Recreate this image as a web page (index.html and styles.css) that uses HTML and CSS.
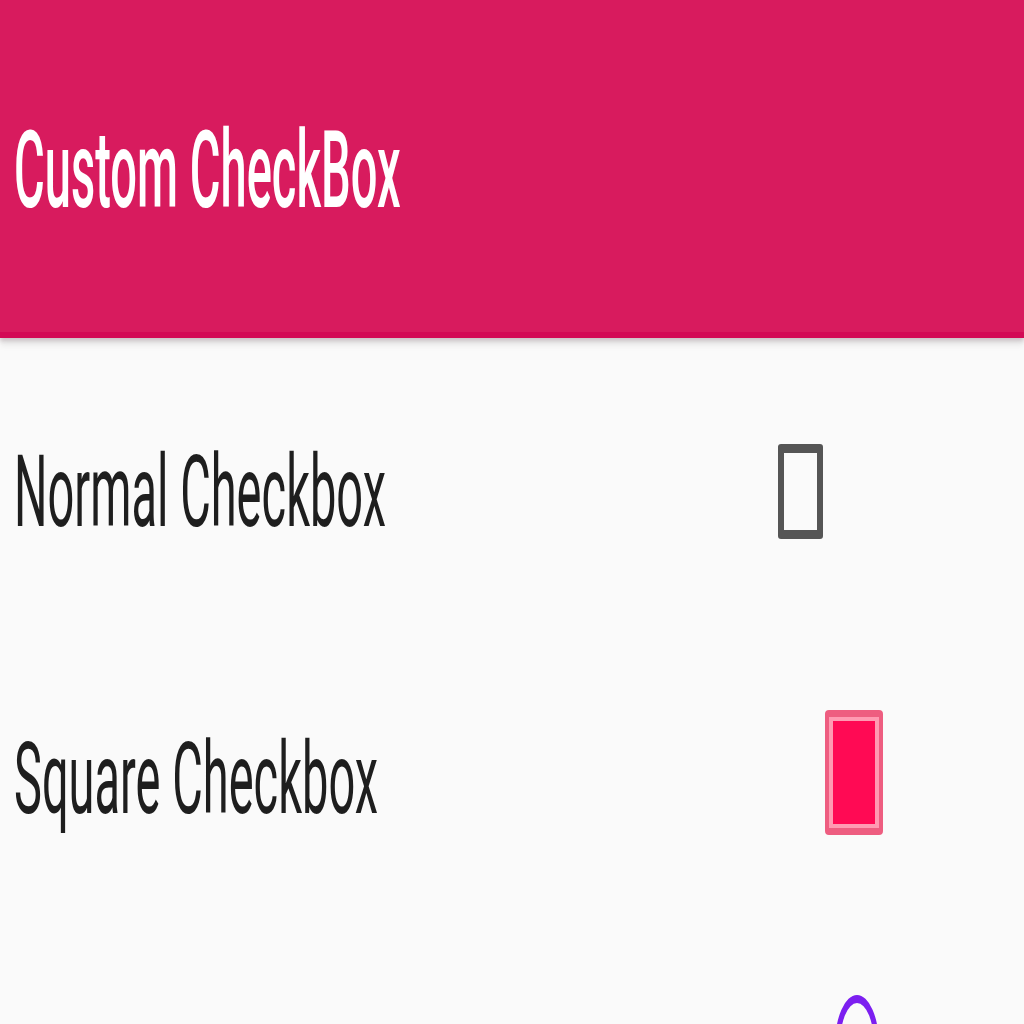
FILE: index.html
```html
<!DOCTYPE html>
<html>
<head>
<meta charset="utf-8">
<link rel="stylesheet" href="styles.css">
</head>
<body>
<header class="appbar">
  <h1 class="title"><span class="squeeze">Custom CheckBox</span></h1>
</header>
<main class="list">
  <div class="row">
    <div class="label label-normal"><span class="squeeze">Normal Checkbox</span></div>
    <div class="box box-normal"></div>
  </div>
  <div class="row">
    <div class="label label-square"><span class="squeeze">Square Checkbox</span></div>
    <div class="box box-square"></div>
  </div>
  <div class="row row-top">
    <div class="box box-circle"></div>
  </div>
</main>
</body>
</html>
```
FILE: styles.css
```css
html, body {
  margin: 0;
  padding: 0;
  width: 1024px;
  height: 1024px;
  overflow: hidden;
  background: #fafafa;
  font-family: Roboto, "Liberation Sans", sans-serif;
}
.appbar {
  position: relative;
  z-index: 1;
  height: 332px;
  background: #d81b5e;
  border-bottom: 6px solid #d30a55;
  box-shadow: 0 3px 4px rgba(120, 90, 100, 0.28), 0 8px 6px rgba(0, 0, 0, 0.06);
  box-sizing: content-box;
  padding-left: 14px;
}
.title {
  margin: 0;
  padding-top: 116px;
  font-size: 108px;
  line-height: 1;
  font-weight: 500;
  color: #fff;
  white-space: nowrap;
}
.squeeze {
  display: inline-block;
  transform-origin: left center;
  white-space: nowrap;
}
.title .squeeze {
  transform: scaleX(0.436);
}
.list {
  padding-top: 10px;
}
.row {
  height: 287px;
  display: flex;
  align-items: center;
  padding-left: 14px;
}
.row-top {
  align-items: flex-start;
}
.label {
  font-size: 100px;
  line-height: 1;
  color: #1e1e1e;
  flex: none;
}
.label .squeeze {
  transform: scaleX(0.47);
}
.label-normal {
  width: 764px;
}
.label-square {
  width: 811px;
}
.box {
  flex: none;
  box-sizing: border-box;
}
.box-normal {
  width: 45px;
  height: 95px;
  border-style: solid;
  border-color: #555;
  border-width: 9px 6px;
  border-radius: 3px;
  background: #fafafa;
}
.box-square {
  width: 58px;
  height: 125px;
  margin-top: -12px;
  border-style: solid;
  border-color: #ee5d80;
  border-width: 7px 4px;
  border-radius: 4px;
  background: #ff0a54;
  box-shadow: inset 0 0 0 4px #ff9ab2;
}
.box-circle {
  width: 44px;
  height: 100px;
  margin-top: 73px;
  margin-left: 821px;
  border: 5px solid #7c1ff0;
  border-top-width: 8px;
  border-radius: 50%;
}
```
